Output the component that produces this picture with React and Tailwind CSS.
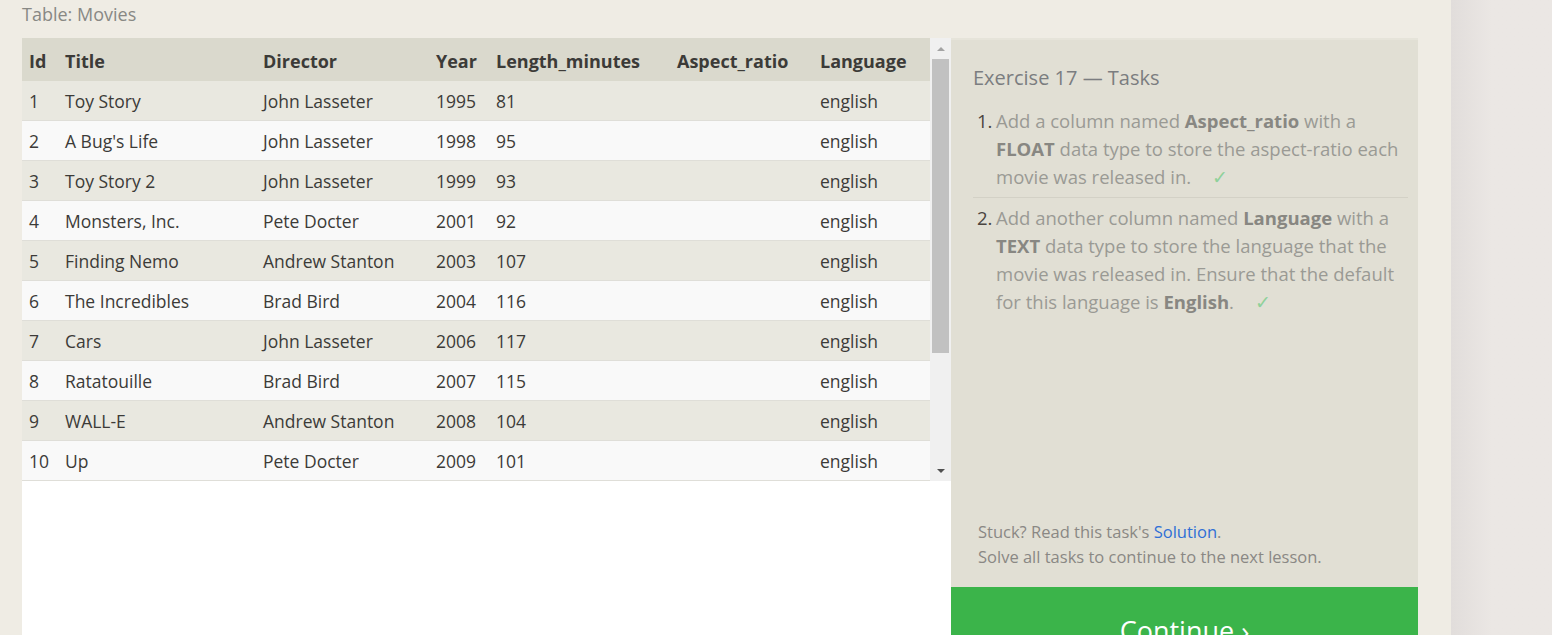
import React from "react";

const movies = [
  [1, "Toy Story", "John Lasseter", 1995, 81],
  [2, "A Bug's Life", "John Lasseter", 1998, 95],
  [3, "Toy Story 2", "John Lasseter", 1999, 93],
  [4, "Monsters, Inc.", "Pete Docter", 2001, 92],
  [5, "Finding Nemo", "Andrew Stanton", 2003, 107],
  [6, "The Incredibles", "Brad Bird", 2004, 116],
  [7, "Cars", "John Lasseter", 2006, 117],
  [8, "Ratatouille", "Brad Bird", 2007, 115],
  [9, "WALL-E", "Andrew Stanton", 2008, 104],
  [10, "Up", "Pete Docter", 2009, 101],
];

const cols = [
  { label: "Id", w: "w-[36px]" },
  { label: "Title", w: "w-[198px]" },
  { label: "Director", w: "w-[173px]" },
  { label: "Year", w: "w-[60px]" },
  { label: "Length_minutes", w: "w-[181px]" },
  { label: "Aspect_ratio", w: "w-[143px]" },
  { label: "Language", w: "w-[117px]" },
];

const Check = () => <span className="ml-4 text-[#8fd19a]">✓</span>;

const App = () => {
  return (
    <div className="w-[1552px] h-[635px] overflow-hidden flex bg-[#efece4] font-['Open_Sans',sans-serif]">
      <div className="w-[1451px] flex flex-col pl-[22px] pr-[33px]">
        <div className="h-[38px] pt-[1px] text-[18px] text-[#888884] leading-[26px]">Table: Movies</div>

        <div className="flex flex-1 min-h-0">
          {/* Left: table */}
          <div className="w-[929px] flex flex-col bg-white">
            <div className="flex">
              <div className="w-[908px]">
                <div className="flex h-[43px] items-center pt-[3px] bg-[#dad9cd] text-[#3c3b38] font-bold text-[18px]">
                  {cols.map((c) => (
                    <div key={c.label} className={`${c.w} pl-[7px] whitespace-nowrap`}>
                      {c.label}
                    </div>
                  ))}
                </div>
                {movies.map((m, i) => (
                  <div
                    key={m[0]}
                    className={`flex h-[40px] items-center pt-[2px] border-b border-[#dfded8] text-[17.5px] text-[#3c3b38] ${
                      i % 2 === 0 ? "bg-[#e9e8e0]" : "bg-[#f9f9f9]"
                    }`}
                  >
                    <div className="w-[36px] pl-[7px]">{m[0]}</div>
                    <div className="w-[198px] pl-[7px] whitespace-nowrap">{m[1]}</div>
                    <div className="w-[173px] pl-[7px] whitespace-nowrap">{m[2]}</div>
                    <div className="w-[60px] pl-[7px]">{m[3]}</div>
                    <div className="w-[181px] pl-[7px]">{m[4]}</div>
                    <div className="w-[143px] pl-[7px]"></div>
                    <div className="w-[117px] pl-[7px]">english</div>
                  </div>
                ))}
              </div>
              {/* scrollbar */}
              <div className="w-[21px] bg-[#f0f0f0] flex flex-col items-center">
                <div className="h-[21px] flex items-center justify-center">
                  <div className="w-0 h-0 border-l-[4px] border-r-[4px] border-b-[4px] border-l-transparent border-r-transparent border-b-[#a3a3a3]"></div>
                </div>
                <div className="w-[17px] h-[294px] bg-[#c1c1c1]"></div>
                <div className="flex-1"></div>
                <div className="h-[21px] flex items-center justify-center">
                  <div className="w-0 h-0 border-l-[4px] border-r-[4px] border-t-[4px] border-l-transparent border-r-transparent border-t-[#505050]"></div>
                </div>
              </div>
            </div>
          </div>

          {/* Right: tasks */}
          <div className="w-[467px] flex flex-col bg-[#e1dfd4] border-t-2 border-[#e6e4da]">
            <div className="flex-1 pl-[22px] pr-[10px] pt-[23px]">
              <div className="text-[20px] text-[#7b7d80] leading-[30px]">Exercise 17 — Tasks</div>
              <ol className="mt-[14px] text-[18.5px] leading-[28px] text-[#9a9a94]">
                <li className="flex pb-[6px] border-b border-[#d3d1c6]">
                  <span className="w-[23px] pl-[4px] text-[#4a4540]">1.</span>
                  <span className="flex-1">
                    Add a column named <b className="text-[#888782]">Aspect_ratio</b> with a{" "}
                    <b className="text-[#888782]">FLOAT</b> data type to store the aspect-ratio each movie was
                    released in. <Check />
                  </span>
                </li>
                <li className="flex pt-[6px]">
                  <span className="w-[23px] pl-[4px] text-[#4a4540]">2.</span>
                  <span className="flex-1">
                    Add another column named <b className="text-[#888782]">Language</b> with a{" "}
                    <b className="text-[#888782]">TEXT</b> data type to store the language that the movie was
                    released in. Ensure that the default for this language is{" "}
                    <b className="text-[#888782]">English</b>. <Check />
                  </span>
                </li>
              </ol>
            </div>
            <div className="pl-[27px] pb-[18px] text-[16.5px] leading-[25px] text-[#8a8884]">
              <div>
                Stuck? Read this task's <span className="text-[#2f6fd6]">Solution</span>.
              </div>
              <div>Solve all tasks to continue to the next lesson.</div>
            </div>
            <div className="h-[48px] shrink-0 bg-[#3bb44a] flex justify-center pt-[26px]">
              <span className="text-white text-[27px] leading-[36px]">Continue ›</span>
            </div>
          </div>
        </div>
      </div>
      <div className="flex-1 bg-gradient-to-r from-[#e1dddb] to-[#ebe7e4] to-[40%]"></div>
    </div>
  );
};

export default App;
